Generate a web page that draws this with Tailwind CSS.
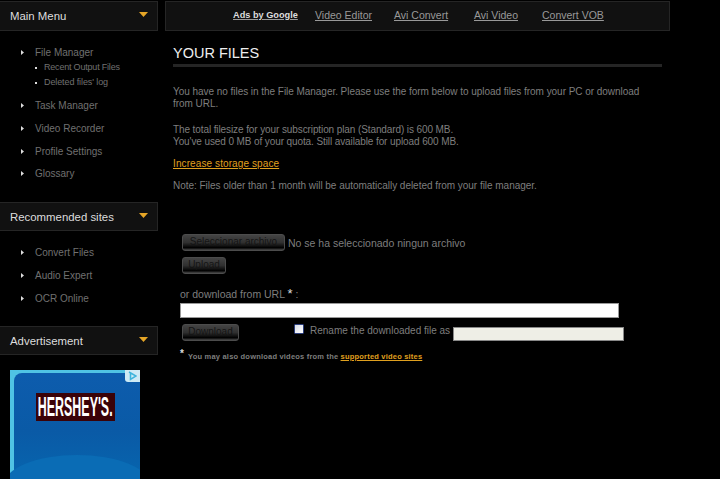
<!DOCTYPE html>
<html lang="en">
<head>
<meta charset="utf-8">
<title>Your files</title>
<script src="https://cdn.jsdelivr.net/npm/@tailwindcss/browser@4"></script>
</head>
<body class="bg-black">
<div class="w-[720px] h-[479px] overflow-hidden bg-black flex font-['Liberation_Sans',Arial,sans-serif] text-[10px] text-[#707070]">
  <aside class="w-[158px] shrink-0 pt-[1px]">
    <div class="h-[30px] pt-[1px] bg-[#111111] border border-l-0 border-[#252525] flex items-center justify-between pl-[10px] pr-[9px] text-[11.4px] text-[#dddddd]">
      <span>Main Menu</span>
      <svg width="9" height="5" viewBox="0 0 9 5" class="mb-[4px]"><path d="M0 0H9L4.5 5Z" fill="#e5a526"/></svg>
    </div>
    <ul class="pl-[21px] pt-[14px]">
      <li class="flex items-center h-[14px]"><svg width="3" height="5" viewBox="0 0 3 5" class="mr-[11px]"><path d="M0 0L3 2.5L0 5Z" fill="#dddddd"/></svg>File Manager</li>
      <li class="flex items-center h-[16px] pt-[2px] text-[9px] tracking-[-0.2px] pl-[14px]"><span class="w-[2px] h-[2px] bg-[#dddddd] mr-[7px]"></span>Recent Output Files</li>
      <li class="flex items-center h-[15px] pt-[1px] text-[9px] tracking-[-0.1px] pl-[14px]"><span class="w-[2px] h-[2px] bg-[#dddddd] mr-[7px]"></span>Deleted files' log</li>
      <li class="flex items-center h-[14px] mt-[8px]"><svg width="3" height="5" viewBox="0 0 3 5" class="mr-[11px]"><path d="M0 0L3 2.5L0 5Z" fill="#dddddd"/></svg>Task Manager</li>
      <li class="flex items-center h-[14px] mt-[9px]"><svg width="3" height="5" viewBox="0 0 3 5" class="mr-[11px]"><path d="M0 0L3 2.5L0 5Z" fill="#dddddd"/></svg>Video Recorder</li>
      <li class="flex items-center h-[14px] mt-[9px]"><svg width="3" height="5" viewBox="0 0 3 5" class="mr-[11px]"><path d="M0 0L3 2.5L0 5Z" fill="#dddddd"/></svg>Profile Settings</li>
      <li class="flex items-center h-[14px] mt-[8px]"><svg width="3" height="5" viewBox="0 0 3 5" class="mr-[11px]"><path d="M0 0L3 2.5L0 5Z" fill="#dddddd"/></svg>Glossary</li>
    </ul>
    <div class="mt-[22px] h-[29px] pt-[2px] bg-[#111111] border border-l-0 border-[#252525] flex items-center justify-between pl-[10px] pr-[9px] text-[11.4px] text-[#dddddd]">
      <span>Recommended sites</span>
      <svg width="9" height="5" viewBox="0 0 9 5" class="mb-[4px]"><path d="M0 0H9L4.5 5Z" fill="#e5a526"/></svg>
    </div>
    <ul class="pl-[21px] pt-[14px]">
      <li class="flex items-center h-[14px]"><svg width="3" height="5" viewBox="0 0 3 5" class="mr-[11px]"><path d="M0 0L3 2.5L0 5Z" fill="#dddddd"/></svg>Convert Files</li>
      <li class="flex items-center h-[14px] mt-[9px]"><svg width="3" height="5" viewBox="0 0 3 5" class="mr-[11px]"><path d="M0 0L3 2.5L0 5Z" fill="#dddddd"/></svg>Audio Expert</li>
      <li class="flex items-center h-[14px] mt-[9px]"><svg width="3" height="5" viewBox="0 0 3 5" class="mr-[11px]"><path d="M0 0L3 2.5L0 5Z" fill="#dddddd"/></svg>OCR Online</li>
    </ul>
    <div class="mt-[21px] h-[29px] pt-[2px] bg-[#111111] border border-l-0 border-[#252525] flex items-center justify-between pl-[10px] pr-[9px] text-[11.4px] text-[#dddddd]">
      <span>Advertisement</span>
      <svg width="9" height="5" viewBox="0 0 9 5" class="mb-[4px]"><path d="M0 0H9L4.5 5Z" fill="#e5a526"/></svg>
    </div>
    <div class="relative ml-[10px] mt-[15px] w-[130px] h-[120px] bg-[#4fc3e4] pl-[4px] pt-[3px] overflow-hidden">
      <div class="h-full rounded-tl-[8px] bg-gradient-to-b from-[#0d5cad] via-[#0a5aa6] to-[#0668b0] relative">
        <div class="absolute left-[22px] top-[20px] w-[79px] h-[28px] bg-[#3a0208] flex items-center justify-center overflow-hidden">
          <span class="text-white font-bold text-[27px] leading-none whitespace-nowrap scale-x-[0.46]">HERSHEY'S.</span>
        </div>
        <div class="absolute left-[-10px] right-[-10px] top-[82px] h-[60px] rounded-[50%] bg-[#0a6cb5]"></div>
      </div>
      <div class="absolute right-0 top-0 w-[15px] h-[12px] bg-[#cdeaf5] rounded-bl-[3px] flex items-center justify-center">
        <svg width="9" height="10" viewBox="0 0 9 10"><path d="M1 1L8 5L2.5 8.5V2.5" fill="none" stroke="#3fb4dc" stroke-width="1.5"/></svg>
      </div>
    </div>
  </aside>

  <main class="ml-[7px] w-[505px] shrink-0 pt-[1px] text-[#7e7e7e]">
    <nav class="h-[30px] bg-[#111111] border border-[#252525] flex items-center pl-[67px] text-[10.5px] text-[#999999] underline pb-[1px]">
      <span class="font-bold text-[#dddddd] w-[82px] text-[9.2px]">Ads by Google</span>
      <span class="w-[79px]">Video Editor</span>
      <span class="w-[80px]">Avi Convert</span>
      <span class="w-[68px]">Avi Video</span>
      <span>Convert VOB</span>
    </nav>
    <div class="pl-[8px] pr-[8px]">
      <h1 class="mt-[14px] h-[19px] text-[14.5px] leading-[17px] text-[#eeeeee] border-b-[3px] border-[#252525] box-content">YOUR FILES</h1>
      <p class="mt-[19px] leading-[12px] tracking-[-0.04px]">You have no files in the File Manager. Please use the form below to upload files from your PC or download<br>from URL.</p>
      <p class="mt-[14px] leading-[12px] tracking-[-0.1px]">The total filesize for your subscription plan (Standard) is 600 MB.<br>You've used 0 MB of your quota. Still available for upload 600 MB.</p>
      <p class="mt-[10px] leading-[12px] text-[#e0a11f] underline tracking-[0.1px]">Increase storage space</p>
      <p class="mt-[10px] leading-[12px] tracking-[-0.03px]">Note: Files older than 1 month will be automatically deleted from your file manager.</p>
      <div class="mt-[42px] pl-[9px] flex items-center h-[17px]">
        <span class="w-[103px] h-[17px] rounded-[3px] border border-[#4c4c4c] bg-[linear-gradient(#444444_0%,#303030_50%,#151515_70%,#000000_85%,#484848_100%)] text-[#151515] text-[10px] text-center leading-[14px] overflow-hidden">Seleccionar archivo</span>
        <span class="ml-[3px] pt-[2px] text-[10.5px] text-[#7e7e7e]">No se ha seleccionado ningun archivo</span>
      </div>
      <div class="mt-[6px] pl-[9px]">
        <span class="block w-[44px] h-[17px] rounded-[3px] border border-[#4c4c4c] bg-[linear-gradient(#444444_0%,#303030_50%,#151515_70%,#000000_85%,#484848_100%)] text-[#151515] text-center leading-[14px] overflow-hidden">Upload</span>
      </div>
      <div class="mt-[13px] ml-[7px] h-[14px] text-[10.5px] leading-[14px] text-[#7e7e7e]">or download from URL <span class="text-[#dddddd] text-[13px] leading-[10px]">*</span> :</div>
      <div class="mt-[2px] ml-[7px] w-[439px] h-[15px] bg-white border border-[#999999]"></div>
      <div class="mt-[6px] ml-[9px] flex items-start h-[18px]">
        <span class="w-[57px] h-[17px] rounded-[3px] border border-[#4c4c4c] bg-[linear-gradient(#444444_0%,#303030_50%,#151515_70%,#000000_85%,#484848_100%)] text-[#151515] text-center leading-[14px] overflow-hidden">Download</span>
        <span class="ml-[55px] w-[10px] h-[10px] border border-[#2c3e7c] bg-gradient-to-br from-[#d8dce6] to-[#ffffff] rounded-[1px]"></span>
        <span class="ml-[6px] text-[10px] text-[#7e7e7e] leading-[13px]">Rename the downloaded file as</span>
        <span class="ml-[3px] mt-[3px] w-[171px] h-[14px] bg-[#eeeee6] border border-[#888888]"></span>
      </div>
      <div class="mt-[9px] ml-[7px] flex items-start text-[7.5px] font-bold leading-[12px] tracking-[0.2px] text-[#7e7e7e]">
        <span class="text-[#dddddd] text-[10px] leading-[8px] mr-[4px] -mt-[1px]">*</span>
        <span>You may also download videos from the <span class="text-[#e0a11f] underline">supported video sites</span></span>
      </div>
    </div>
  </main>
</div>
</body>
</html>
